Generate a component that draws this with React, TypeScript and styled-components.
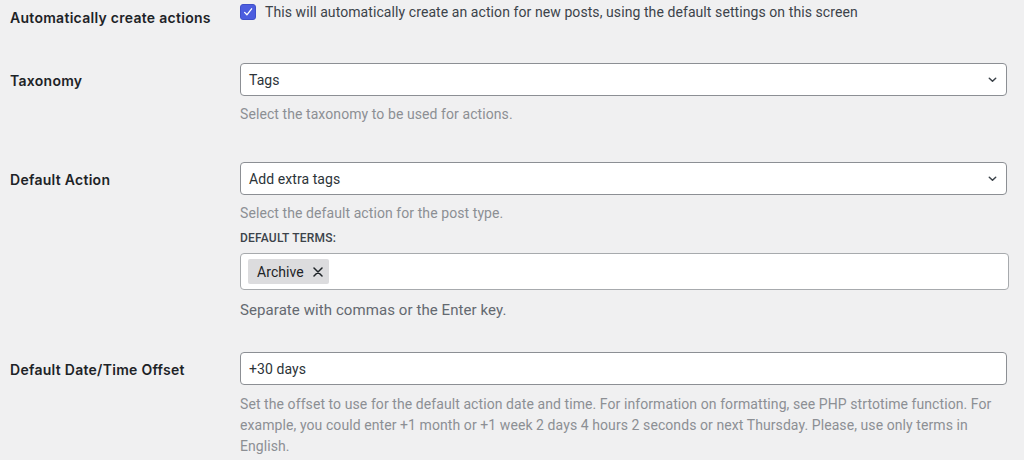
import React from "react";
import styled, { createGlobalStyle } from "styled-components";

const Global = createGlobalStyle`
  html, body { margin: 0; padding: 0; background: #f0f0f1; }
  body {
    font-family: Roboto, "Noto Sans", "Liberation Sans", sans-serif;
    font-size: 14px;
    letter-spacing: 0.08px;
    color: #3c434a;
    -webkit-font-smoothing: antialiased;
  }
`;

const Form = styled.div`
  display: flex;
  flex-direction: column;
  width: 1024px;
  height: 460px;
  overflow: hidden;
  background: #f0f0f1;
`;

const Row = styled.div<{ $mt: number }>`
  display: grid;
  grid-template-columns: 230px 769px;
  padding-left: 10px;
  margin-top: ${(p) => p.$mt}px;
`;

const Label = styled.div`
  padding-top: 6.5px;
  font-family: Inter, Roboto, sans-serif;
  font-size: 14px;
  line-height: 21px;
  font-weight: 600;
  letter-spacing: 0.28px;
  color: #1d2327;
`;

const Field = styled.div<{ $pt?: number }>`
  display: flex;
  flex-direction: column;
  padding-top: ${(p) => p.$pt ?? 0}px;
`;

const CheckLine = styled.label`
  display: flex;
  align-items: center;
  gap: 9px;
  line-height: 16px;
  color: #3c434a;
`;

const Check = styled.span`
  width: 16px;
  height: 16px;
  box-sizing: border-box;
  border-radius: 3px;
  background: #4c5ddf;
  border: 1px solid #3f4fc9;
  display: flex;
  align-items: center;
  justify-content: center;
  flex: none;
`;

const Box = styled.div<{ $w: number; $h: number }>`
  box-sizing: border-box;
  width: ${(p) => p.$w}px;
  height: ${(p) => p.$h}px;
  background: #fff;
  border: 1px solid #8c8f94;
  border-radius: 4px;
  display: flex;
  align-items: center;
  justify-content: space-between;
  padding: 0 9px 0 8px;
  color: #2c3338;
  font-size: 14px;
`;

const TagBox = styled(Box)`
  justify-content: flex-start;
  padding: 0 7px;
  border-color: #a7aaad;
`;

const Chip = styled.span`
  display: inline-flex;
  align-items: center;
  gap: 9px;
  height: 25px;
  padding: 0 6px 0 9px;
  background: #dcdcde;
  border-radius: 2px;
  color: #1d2327;
`;

const Desc = styled.p<{ $dark?: boolean; $mt: number }>`
  margin: ${(p) => p.$mt}px 0 0 0;
  line-height: 21px;
  font-size: ${(p) => (p.$dark ? 15 : 14)}px;
  color: ${(p) => (p.$dark ? "#646970" : "#8c8f94")};
`;

const SubLabel = styled.div`
  margin-top: 6px;
  margin-bottom: 7px;
  font-size: 12px;
  line-height: 16px;
  font-weight: 500;
  letter-spacing: 0.2px;
  text-transform: uppercase;
  color: #3c434a;
`;

const Chevron = () => (
  <svg width="9" height="6" viewBox="0 0 9 6" aria-hidden="true">
    <path d="M1.3 1.3 L4.5 4.3 L7.7 1.3" fill="none" stroke="#3c434a" strokeWidth="1.5" strokeLinecap="round" strokeLinejoin="round" />
  </svg>
);

const Tick = () => (
  <svg width="12" height="12" viewBox="0 0 12 12" aria-hidden="true">
    <path d="M2.6 6.4 L4.9 8.8 L9.6 2.8" fill="none" stroke="#fff" strokeWidth="1.3" strokeLinecap="round" strokeLinejoin="round" />
  </svg>
);

const Cross = () => (
  <svg width="10" height="10" viewBox="0 0 10 10" aria-hidden="true">
    <path d="M1 1 L9 9 M9 1 L1 9" fill="none" stroke="#1d2327" strokeWidth="1.5" strokeLinecap="round" />
  </svg>
);

export default function App() {
  return (
    <>
      <Global />
      <Form>
        <Row $mt={0}>
          <Label>Automatically create actions</Label>
          <Field $pt={4}>
            <CheckLine>
              <Check>
                <Tick />
              </Check>
              This will automatically create an action for new posts, using the default settings on this screen
            </CheckLine>
          </Field>
        </Row>

        <Row $mt={35.5}>
          <Label>Taxonomy</Label>
          <Field>
            <Box $w={767} $h={33}>
              <span>Tags</span>
              <Chevron />
            </Box>
            <Desc $mt={8}>Select the taxonomy to be used for actions.</Desc>
          </Field>
        </Row>

        <Row $mt={37}>
          <Label>Default Action</Label>
          <Field>
            <Box $w={767} $h={33}>
              <span>Add extra tags</span>
              <Chevron />
            </Box>
            <Desc $mt={8}>Select the default action for the post type.</Desc>
            <SubLabel>Default terms:</SubLabel>
            <TagBox $w={769} $h={37}>
              <Chip>
                Archive
                <Cross />
              </Chip>
            </TagBox>
            <Desc $dark $mt={10}>Separate with commas or the Enter key.</Desc>
          </Field>
        </Row>

        <Row $mt={31}>
          <Label>Default Date/Time Offset</Label>
          <Field>
            <Box $w={767} $h={33}>
              <span>+30 days</span>
            </Box>
            <Desc $mt={9}>
              Set the offset to use for the default action date and time. For information on formatting, see PHP strtotime function. For example, you could enter +1 month or +1 week 2 days 4 hours 2 seconds or next Thursday. Please, use only terms in English.
            </Desc>
          </Field>
        </Row>
      </Form>
    </>
  );
}
